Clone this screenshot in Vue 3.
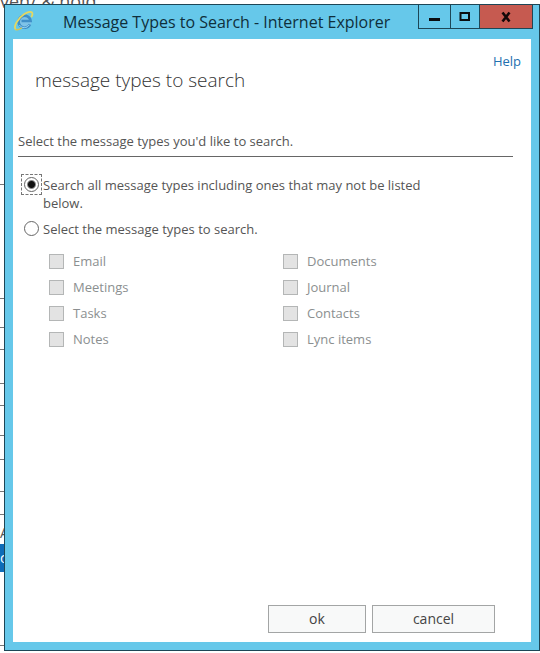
<template>
  <div class="desktop">
    <!-- Page behind the dialog -->
    <div class="backdrop" aria-hidden="true">
      <p class="backdrop-title">ven/ &amp; hold</p>
      <div
        v-for="(row, i) in backdropRows"
        :key="i"
        class="backdrop-row"
        :class="row.kind"
        :style="{ height: row.height + 'px' }"
      >{{ row.text }}</div>
    </div>

    <section class="window" role="dialog" aria-labelledby="window-title">
      <header class="titlebar">
        <svg class="ie-icon" viewBox="0 0 22 22" fill="none" aria-hidden="true">
          <circle cx="11.500" cy="11.500" r="7" fill="#7fc3e8" />
          <path d="M17 14.400a6 6 0 1 1 .6-3.400H8.500" stroke="#3f8fc8" stroke-width="2.600" />
          <path d="M16.2 14.8a5.8 5.8 0 0 1-9.8.3" stroke="#9bd6f2" stroke-width="1" />
          <path d="M3 19.500C-.2 17.400 4.600 8.400 11 4.300c4-2.600 8-3.400 8.400-.9.200 1-.2 2.200-.8 3.200" stroke="#e6d860" stroke-width="1.800" stroke-linecap="round" />
          <path d="M3 19.500c1.300.8 3.600-.2 5.400-1.300" stroke="#d4c455" stroke-width="1.400" stroke-linecap="round" />
        </svg>
        <span id="window-title" class="window-title">Message Types to Search - Internet Explorer</span>
        <div class="window-controls">
          <button type="button" class="control" aria-label="Minimize">
            <svg viewBox="0 0 12 12" aria-hidden="true"><path d="M0 7h11v3H0z" fill="#0a0d0f" /></svg>
          </button>
          <button type="button" class="control maximize" aria-label="Maximize">
            <svg viewBox="0 0 12 12" fill="none" aria-hidden="true"><path d="M1.500 2h8.500v7H1.500z" stroke="#0a0d0f" stroke-width="2" /></svg>
          </button>
          <button type="button" class="control close" aria-label="Close">
            <svg viewBox="0 0 12 12" fill="none" aria-hidden="true"><path d="M2.500 1.500l7 9M9.500 1.500l-7 9" stroke="#150808" stroke-width="2.600" /></svg>
          </button>
        </div>
      </header>

      <form class="content" @submit.prevent>
        <a class="help" href="#">Help</a>
        <h1 class="heading">message types to search</h1>
        <p class="intro">Select the message types you'd like to search.</p>

        <div class="options">
          <label class="option">
            <span class="radio-box" :class="{ focused: mode === 'all' }">
              <input v-model="mode" type="radio" name="mode" value="all" />
            </span>
            <span>Search all message types including ones that may not be listed below.</span>
          </label>
          <label class="option">
            <span class="radio-box" :class="{ focused: mode === 'selected' }">
              <input v-model="mode" type="radio" name="mode" value="selected" />
            </span>
            <span>Select the message types to search.</span>
          </label>
        </div>

        <div class="types">
          <label v-for="type in types" :key="type" class="type">
            <input v-model="selected" type="checkbox" :value="type" :disabled="mode === 'all'" />
            <span>{{ type }}</span>
          </label>
        </div>

        <footer class="actions">
          <button type="submit" class="btn">ok</button>
          <button type="button" class="btn wide">cancel</button>
        </footer>
      </form>
    </section>
  </div>
</template>

<script setup>
import { ref } from 'vue'

const mode = ref('all')
const selected = ref([])

const types = [
  'Email', 'Documents',
  'Meetings', 'Journal',
  'Tasks', 'Contacts',
  'Notes', 'Lync items',
]

const backdropRows = [
  { height: 171 },
  { height: 114 },
  { height: 29 },
  { height: 22 },
  { height: 34 },
  { height: 22 },
  { height: 30 },
  { height: 24 },
  { height: 32 },
  { height: 23 },
  { height: 29, kind: 'plain', text: 'A' },
  { height: 28, kind: 'active', text: 'c' },
  { height: 74 },
]
</script>

<style>
body {
  margin: 0;
  background: #fff;
}
</style>

<style scoped>
.desktop {
  position: relative;
  box-sizing: border-box;
  min-height: 100vh;
  padding: 4px 0 2px 4px;
  overflow: hidden;
  font-family: "Open Sans", "Noto Sans", sans-serif;
  font-size: 13px;
  line-height: 18px;
  color: #555;
}
.backdrop {
  position: absolute;
  inset: 0;
  overflow: hidden;
}
.backdrop-title {
  height: 14px;
  margin: 0;
  font-size: 18px;
  line-height: 2px;
}
.backdrop-row {
  box-sizing: border-box;
  border-bottom: 1px solid #777;
  font-size: 14px;
  line-height: 28px;
}
.backdrop-row.plain {
  border-bottom: none;
  line-height: 36px;
}
.backdrop-row.active {
  border-bottom: none;
  background: #0e6cb8;
  color: #fff;
}

.window {
  position: relative;
  display: flex;
  flex-direction: column;
  box-sizing: border-box;
  min-height: calc(100vh - 6px);
  padding: 0 8px 8px;
  background: #66c8ea;
  border: 1px solid #1d4656;
}
.titlebar {
  display: flex;
  align-items: flex-start;
  height: 34px;
}
.ie-icon {
  width: 22px;
  height: 22px;
  margin-top: 5px;
  flex-shrink: 0;
}
.window-title {
  flex: 1;
  min-width: 0;
  padding-left: 28px;
  font-size: 16px;
  line-height: 34px;
  color: #0f2f3b;
  white-space: nowrap;
}
.window-controls {
  display: flex;
  flex-shrink: 0;
  margin-right: -2px;
  border: 1px solid #1d4656;
  border-top: none;
}
.control {
  display: flex;
  align-items: center;
  justify-content: center;
  box-sizing: border-box;
  width: 32px;
  height: 23px;
  padding: 0;
  background: transparent;
  border: none;
  border-right: 1px solid #1d4656;
}
.control svg {
  width: 12px;
  height: 12px;
}
.control.maximize { width: 29px; }
.control.close {
  width: 52px;
  background: #c65a50;
  border-right: none;
}

.content {
  display: flex;
  flex: 1;
  flex-direction: column;
  padding: 13px 18px 9px 5px;
  background: #fff;
}
.help {
  align-self: flex-end;
  margin-right: -8px;
  color: #2170b0;
  text-decoration: none;
}
.heading {
  margin: 0;
  padding-left: 17px;
  font-size: 19px;
  font-weight: 300;
  line-height: 20px;
  color: #333;
}
.intro {
  margin: 42px 0 0;
  padding-bottom: 6px;
  border-bottom: 1px solid #666;
}
.options {
  display: flex;
  flex-direction: column;
  gap: 8px;
  max-width: 410px;
  padding-top: 19px;
}
.option {
  display: flex;
  align-items: flex-start;
}
.radio-box {
  display: flex;
  align-items: center;
  justify-content: center;
  box-sizing: border-box;
  width: 21px;
  height: 21px;
  margin: -2px 1px -2px 3px;
  flex-shrink: 0;
  border: 1px dashed transparent;
}
.radio-box.focused { border-color: #777; }
.radio-box input {
  appearance: none;
  box-sizing: border-box;
  width: 15px;
  height: 15px;
  margin: 0;
  background: #fff;
  border: 1px solid #666;
  border-radius: 50%;
}
.radio-box input:checked {
  background: radial-gradient(circle, #111 3px, #fff 5px);
}

.types {
  display: grid;
  grid-template-columns: 234px 1fr;
  gap: 8px 0;
  padding: 14px 0 0 31px;
}
.type {
  display: flex;
  align-items: center;
  gap: 9px;
  color: #8b8f90;
}
.type input {
  appearance: none;
  box-sizing: border-box;
  width: 15px;
  height: 15px;
  margin: 0;
  background: #fff;
  border: 1px solid #666;
}
.type input:checked { background: #555; }
.type input:disabled {
  background: #e3e3e3;
  border-color: #b4b6b6;
}

.actions {
  display: flex;
  justify-content: flex-end;
  gap: 6px;
  margin-top: auto;
  padding-right: 18px;
}
.btn {
  box-sizing: border-box;
  width: 98px;
  height: 28px;
  padding: 0 0 2px;
  font-family: inherit;
  font-size: 14px;
  color: #444;
  background: #f8f9f9;
  border: 1px solid #a3a5a5;
}
.btn.wide { width: 123px; }
</style>
